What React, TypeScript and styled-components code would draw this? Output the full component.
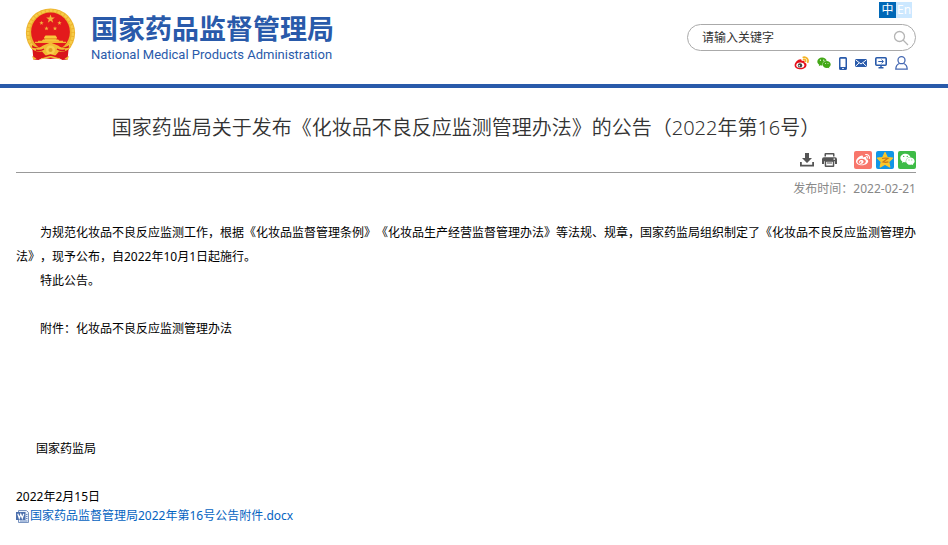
import React from "react";
import styled, { createGlobalStyle } from "styled-components";
import { FaWeixin, FaWeibo } from "react-icons/fa";

const GlobalStyle = createGlobalStyle`
  * { box-sizing: border-box; }
  body {
    margin: 0;
    background: #fff;
    color: #000;
    font-family: "Noto Sans", "Noto Sans CJK SC", sans-serif;
    font-size: 12px;
    line-height: 24px;
    text-spacing-trim: space-all;
  }
`;

const Header = styled.header`
  display: flex;
  justify-content: space-between;
  align-items: flex-start;
  height: 88px;
  padding: 2px 32px 0 24px;
  border-bottom: 4px solid #295aaa;
`;

const Brand = styled.a`
  display: flex;
  align-items: flex-start;
  gap: 15px;
  padding-top: 5px;
  color: #295aaa;
  text-decoration: none;
`;

const BrandNames = styled.span`
  display: flex;
  flex-direction: column;
  padding-top: 2px;
  white-space: nowrap;
`;

const BrandName = styled.strong`
  font: 700 27px/38px "Noto Sans CJK SC", sans-serif;
`;

const BrandLatin = styled.span`
  font: 400 13px/16px Roboto, sans-serif;
`;

const Tools = styled.div`
  display: flex;
  flex-direction: column;
  align-items: flex-end;
  flex: 0 1 229px;
`;

const Languages = styled.nav`
  display: flex;
  margin-right: 4px;
`;

const Language = styled.a<{ $active?: boolean }>`
  width: ${(p) => (p.$active ? 17 : 16)}px;
  height: 16px;
  line-height: 16px;
  text-align: center;
  color: #fff;
  text-decoration: none;
  background: ${(p) => (p.$active ? "#0068b7" : "#cce8ff")};
`;

const Search = styled.form`
  display: flex;
  align-items: center;
  width: 100%;
  height: 27px;
  margin-top: 6px;
  padding: 0 6px 0 14px;
  border: 1px solid #aaa;
  border-radius: 14px;
`;

const SearchInput = styled.input`
  flex: 1;
  min-width: 0;
  padding: 0;
  border: 0;
  outline: 0;
  background: none;
  font: inherit;
  line-height: 20px;
  &::placeholder { color: #333; opacity: 1; }
`;

const IconButton = styled.button`
  display: flex;
  padding: 0;
  border: 0;
  background: none;
  cursor: pointer;
`;

const Channels = styled.nav`
  display: flex;
  align-items: center;
  gap: 8px;
  height: 14px;
  margin: 5px 8px 0 0;
`;

const IconLink = styled.a`
  display: flex;
  color: #43a817;
`;

const Article = styled.main`
  padding: 24px 32px 20px 16px;
`;

const Title = styled.h1`
  margin: 0;
  color: #333;
  font-size: 20px;
  font-weight: 350;
  line-height: 32px;
  text-align: center;
`;

const Actions = styled.div`
  display: flex;
  justify-content: flex-end;
  align-items: center;
  gap: 4px;
  height: 29px;
  padding-top: 3px;
  border-bottom: 1px solid #999;
`;

const PageActions = styled.div`
  display: flex;
  gap: 8px;
  margin-right: 13px;
`;

const Share = styled.button<{ $color: string }>`
  display: flex;
  align-items: center;
  justify-content: center;
  width: 18px;
  height: 18px;
  padding: 0;
  border: 0;
  border-radius: 2px;
  color: #fff;
  background: ${(p) => p.$color};
  cursor: pointer;
`;

const Published = styled.p`
  margin: 4px 0 20px;
  color: #888;
  text-align: right;
`;

const Paragraph = styled.p`
  margin: 0;
  text-indent: 24px;
`;

const AttachmentNote = styled(Paragraph)`
  margin-top: 24px;
`;

const Signature = styled.p`
  margin: 96px 0 24px;
  padding-left: 20px;
`;

const SignedDate = styled.p`
  margin: 0;
`;

const Download = styled.a`
  display: flex;
  width: fit-content;
  align-items: center;
  gap: 1px;
  line-height: 14px;
  color: #0563c1;
  text-decoration: none;
`;

const star = (x: number, y: number, r: number) =>
  Array.from({ length: 10 }, (_, i) => {
    const a = (Math.PI * i) / 5 - Math.PI / 2;
    const q = i % 2 ? r * 0.4 : r;
    return `${(x + q * Math.cos(a)).toFixed(2)},${(y + q * Math.sin(a)).toFixed(2)}`;
  }).join(" ");

const Emblem = () => (
  <svg width="52" height="56" viewBox="0 0 52 56" aria-hidden="true">
    <circle cx="26.5" cy="26" r="24.6" fill="#edb32d" />
    <circle cx="26.5" cy="26" r="22.4" fill="none" stroke="#f6cb47" strokeWidth="2.500" strokeDasharray="3 1" />
    <circle cx="26.5" cy="25" r="19.4" fill="#e31a1c" />
    <g fill="#f3b43c">
      <polygon points={star(26.5, 12, 4.6)} />
      <polygon points={star(17.5, 16, 2.3)} />
      <polygon points={star(35.5, 16, 2.3)} />
      <polygon points={star(22.5, 21.5, 2.3)} />
      <polygon points={star(31, 21.5, 2.3)} />
    </g>
    <path d="M20 30.500l1.500-2h10l1.500 2-.8 2h2l1.500 2H17.500l1.500-2h2z" fill="#f9c83c" />
    <path d="M11 35.300h31M14 34.300h25" stroke="#f4b631" strokeWidth="1.300" />
    <path d="M21 31.800h11" stroke="#e38d20" />
    <path d="M8 38c3 2.500 6 3 9 2.500L26.500 45l9.500-4.500c3 .5 6 0 9-2.500l-1.500 14.500-5 .5-4-2-8 1-8-1-4 2-5-.5z" fill="#d9151b" />
    <path d="M6 40c5 2 9 1.500 13-1.500l7.500-3 7.500 3c4 3 8 3.500 13 1.500-3 3.500-8 5.500-12 4.500l-4 4.500 6 3.500-10.500-2L16 52.500l6-3.500-4-4.500c-4 1-9-1-12-4.500z" fill="#f2bb35" />
    <circle cx="26.500" cy="43" r="4.500" fill="#f7cf4c" />
    <circle cx="26.500" cy="43" r="2" fill="#df9a22" />
    <path d="M12 43c3 1 5 1 8-1M41 43c-3 1-5 1-8-1M19 50l7.500-2 7.500 2" fill="none" stroke="#d9151b" strokeWidth="1.400" />
    <path d="M8 49l1.500 4 3-1.500zM45 49l-1.500 4-3-1.500z" fill="#f2bb35" />
  </svg>
);

const SearchIcon = () => (
  <svg width="16" height="16" viewBox="0 0 16 16" fill="none" stroke="#b5b5b5" strokeWidth="1.3">
    <circle cx="6.500" cy="6.500" r="5" />
    <path d="M10 10l5 5" />
  </svg>
);

const WeiboIcon = () => (
  <svg width="15" height="14" viewBox="0 0 15 14">
    <path d="M6.300 3.200C4 3.100.6 6.500.6 9.200c0 2.700 2.900 4.100 5.800 4.100 3.600 0 6.100-2.100 6.100-4.400 0-1.500-1.200-2.100-2-2.300.6-1.600-.6-2.300-2.800-1.500.2-1-.2-1.800-1.400-1.900z" fill="#e6101a" />
    <ellipse cx="6.300" cy="9.200" rx="4" ry="2.700" fill="#fff" />
    <circle cx="6" cy="9.400" r="2.200" fill="#444" />
    <circle cx="5.300" cy="9.800" r=".8" fill="#fff" />
    <path d="M9.300 1.300c3-.7 5.500 2 4.500 4.900M9.600 3.500c1.400-.3 2.300.8 1.900 2" fill="none" stroke="#f5b324" strokeWidth="1.700" strokeLinecap="round" />
  </svg>
);

const PhoneIcon = () => (
  <svg width="8" height="13" viewBox="0 0 8 13">
    <path fillRule="evenodd" d="M1.500 0h5Q8 0 8 1.500v10Q8 13 6.500 13h-5Q0 13 0 11.500v-10Q0 0 1.500 0zM1.500 1.800v8.200h5V1.800zM3.200 11v1h1.600v-1z" fill="#295aaa" />
  </svg>
);

const MailIcon = () => (
  <svg width="12" height="8" viewBox="0 0 12 8">
    <rect width="12" height="8" rx="1" fill="#295aaa" />
    <path d="M.5.8L6 5 11.500.8M.5 7.300L4 4M11.500 7.300L8 4" fill="none" stroke="#fff" />
  </svg>
);

const MonitorIcon = () => (
  <svg width="12" height="12" viewBox="0 0 12 12" fill="none" stroke="#295aaa">
    <rect x=".8" y=".8" width="10.400" height="7.400" rx="1" strokeWidth="1.600" />
    <path d="M3.300 4.500h5M6.500 2.700l1.900 1.800-1.900 1.800" />
    <path d="M6 8.500v1.500M3.500 10.800h5" strokeWidth="1.500" />
  </svg>
);

const UserIcon = () => (
  <svg width="13" height="14" viewBox="0 0 13 14" fill="none" stroke="#4568b2" strokeWidth="1.300">
    <circle cx="6.500" cy="4.200" r="3.500" />
    <path d="M4.300 7.500C2.200 8.300.9 10 .8 13.200h11.400C12.100 10 10.800 8.300 8.700 7.500" />
  </svg>
);

const DownloadIcon = () => (
  <svg width="14" height="14" viewBox="0 0 14 14" fill="#555">
    <path d="M5 0h4v5h3L7 10 2 5h3z" />
    <path d="M0 9h1.800v2.800h10.400V9H14v4.600H0z" />
  </svg>
);

const PrintIcon = () => (
  <svg width="15" height="14" viewBox="0 0 15 14" fill="#555">
    <path fillRule="evenodd" d="M3.500 0h8q1 0 1 1v2.500h-10V1q0-1 1-1zM4 1.500v2h7v-2z" />
    <path fillRule="evenodd" d="M2 4.200h11q2 0 2 2V11h-2V8.300H2V11H0V6.200q0-2 2-2zM11.500 5.500v1.200H13V5.500z" />
    <path fillRule="evenodd" d="M2.700 7.500h9.600V13q0 1-1 1H3.700q-1 0-1-1zM4.200 8.800v3.800h6.600V8.800z" />
    <path d="M5 9.500h5v1H5z" />
  </svg>
);

const QzoneIcon = () => (
  <svg width="18" height="18" viewBox="0 0 18 18">
    <polygon points="9,1.500 11.300,6.500 16.600,7.100 12.700,10.700 13.800,16 9,13.300 4.200,16 5.300,10.700 1.400,7.100 6.700,6.500" fill="#fcc72a" stroke="#fcc72a" strokeWidth="1.200" strokeLinejoin="round" />
    <path d="M6 7.500c2-.5 3.500-.5 5.800-.2L7 11c2 .5 3.800.4 5.400-.1" fill="none" stroke="#c9761a" strokeWidth="1.200" />
  </svg>
);

const WordIcon = () => (
  <svg width="13" height="13" viewBox="0 0 13 13">
    <path d="M2.500.5h8l2 2v10h-10z" fill="#e9f0fa" stroke="#7a94c0" />
    <path d="M10 4.500h1.500M10 6.500h1.500M10 8.500h1.500M4 11h7.500" stroke="#6b8ac0" />
    <rect y="2" width="9.500" height="8" fill="#4d70ad" />
    <path d="M1.800 3.800l1.500 4.400 1.500-4 1.500 4 1.500-4.400" fill="none" stroke="#fff" strokeWidth="1.200" />
  </svg>
);

const channels = [
  { label: "微博", icon: <WeiboIcon /> },
  { label: "微信", icon: <FaWeixin size={14} /> },
  { label: "手机版", icon: <PhoneIcon /> },
  { label: "邮箱", icon: <MailIcon /> },
  { label: "客户端", icon: <MonitorIcon /> },
  { label: "个人中心", icon: <UserIcon /> },
];

export default function App() {
  return (
    <>
      <GlobalStyle />
      <Header>
        <Brand href="#">
          <Emblem />
          <BrandNames>
            <BrandName>国家药品监督管理局</BrandName>
            <BrandLatin>National Medical Products Administration</BrandLatin>
          </BrandNames>
        </Brand>
        <Tools>
          <Languages>
            <Language href="#" $active>中</Language>
            <Language href="#">En</Language>
          </Languages>
          <Search onSubmit={(e) => e.preventDefault()}>
            <SearchInput aria-label="请输入关键字" placeholder="请输入关键字" />
            <IconButton aria-label="搜索"><SearchIcon /></IconButton>
          </Search>
          <Channels>
            {channels.map((c) => (
              <IconLink key={c.label} href="#" aria-label={c.label}>{c.icon}</IconLink>
            ))}
          </Channels>
        </Tools>
      </Header>
      <Article>
        <Title>国家药监局关于发布《化妆品不良反应监测管理办法》的公告（2022年第16号）</Title>
        <Actions>
          <PageActions>
            <IconButton aria-label="下载"><DownloadIcon /></IconButton>
            <IconButton aria-label="打印"><PrintIcon /></IconButton>
          </PageActions>
          <Share $color="#f8766b" aria-label="分享到微博"><FaWeibo size={14} /></Share>
          <Share $color="#1295e6" aria-label="分享到QQ空间"><QzoneIcon /></Share>
          <Share $color="#3dbb46" aria-label="分享到微信"><FaWeixin size={15} /></Share>
        </Actions>
        <Published>发布时间：2022-02-21</Published>
        <Paragraph>
          为规范化妆品不良反应监测工作，根据《化妆品监督管理条例》《化妆品生产经营监督管理办法》等法规、规章，国家药监局组织制定了《化妆品不良反应监测管理办法》，现予公布，自2022年10月1日起施行。
        </Paragraph>
        <Paragraph>特此公告。</Paragraph>
        <AttachmentNote>附件：化妆品不良反应监测管理办法</AttachmentNote>
        <Signature>国家药监局</Signature>
        <SignedDate>2022年2月15日</SignedDate>
        <Download href="#"><WordIcon />国家药品监督管理局2022年第16号公告附件.docx</Download>
      </Article>
    </>
  );
}
